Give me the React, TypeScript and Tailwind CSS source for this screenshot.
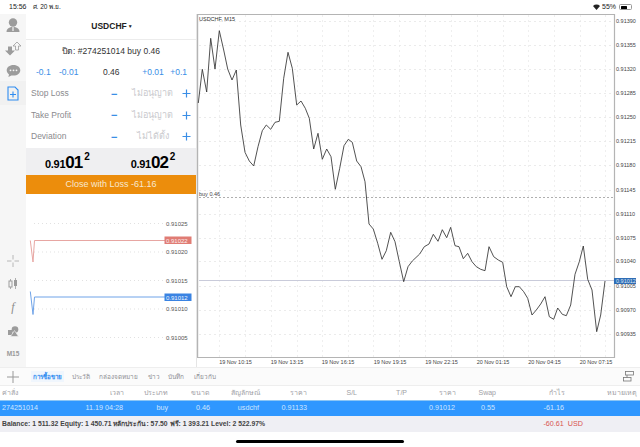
import React from "react";

const pts = "198.3,103 202.3,69.3 206.7,92 210.7,38.3 215,69 219.3,30.7 223.7,50 227.7,69 232,80 236.3,70 240.7,125 245,152.3 249.3,161 253.7,166 258,146.7 262.3,130.7 266.3,125 270.7,129.3 275,122.3 279.3,121.3 283.7,78.3 288,52.3 292.3,68.3 296.7,105 301,101 305.3,108.3 309.3,118.3 313.7,149 318,133.3 322.3,159.3 326.7,149 331,156.7 335.3,189.3 339.7,168.3 344,145.7 348.3,139.3 352.3,142.3 356.7,161 361,166.7 365,181.7 369,224 373.3,229 377.7,243.3 382,259.3 386.3,250.7 390.7,232.3 395,241.7 399.3,261.7 403.7,281.7 408,266.7 412.3,261 419.7,254 424.3,246.7 429,244 433.3,234.3 438,241.3 442.3,229.7 446.7,237.7 450.7,227.3 455,245.7 459,246.7 463.3,258.7 467.7,253.3 472,261.7 476.3,266.7 480.7,269.3 485,270.7 489,246.7 493.7,256.7 498.3,260 502.7,262.3 506.7,286.7 511,296.7 515.3,286.7 519.3,286.7 523.7,291.7 527.7,298.3 532,315 536.3,310 540.7,304 545,296.7 549.3,316.7 553.7,319.3 557.7,308 562.3,314.3 566.3,315.7 570.7,305 575,274.3 579.3,261.7 583.3,246 587.7,279.3 592,290 596.7,331.7 600.7,315 605,281";

const ox = 197;
const oy = 14;
const shifted = pts
  .split(" ")
  .map((p) => {
    const [x, y] = p.split(",").map(Number);
    return `${x - ox},${y - oy}`;
  })
  .join(" ");

const prices = [
  ["0.91390", 21],
  ["0.91355", 45],
  ["0.91320", 69],
  ["0.91285", 93],
  ["0.91250", 117],
  ["0.91215", 141],
  ["0.91180", 165],
  ["0.91145", 190],
  ["0.91110", 214],
  ["0.91075", 238],
  ["0.91040", 261],
  ["0.91005", 286],
  ["0.90970", 310],
  ["0.90935", 334],
] as const;
const times = [
  ["19 Nov 10:15", 235.5],
  ["19 Nov 13:15", 287],
  ["19 Nov 16:15", 338],
  ["19 Nov 19:15", 390],
  ["19 Nov 22:15", 441.5],
  ["20 Nov 01:15", 493],
  ["20 Nov 04:15", 544.5],
  ["20 Nov 07:15", 596],
] as const;
const vGrid = [219, 245, 271, 297, 322, 348, 373, 399, 425, 451, 477, 503, 528, 554, 580, 605];

function Chart() {
  return (
    <svg className="block w-[443px] h-[353px] shrink-0" viewBox="0 0 443 353" fontFamily="'Liberation Sans', sans-serif">
      {prices.map(([, y]) => (
        <line key={y} x1="2" x2="417" y1={y - 14 + 0.5} y2={y - 14 + 0.5} stroke="#e2e2e2" strokeWidth="0.7" strokeDasharray="2 3" />
      ))}
      {vGrid.map((x) => (
        <line key={x} x1={x - ox + 0.5} x2={x - ox + 0.5} y1="1" y2="343" stroke="#e8e8e8" strokeWidth="0.7" strokeDasharray="2 3" />
      ))}
      <line x1="0" x2="417" y1="0.5" y2="0.5" stroke="#b4b4b4" />
      <line x1="0.5" x2="0.5" y1="0" y2="344" stroke="#b4b4b4" strokeWidth="1.4" />
      <line x1="417.5" x2="417.5" y1="0" y2="344" stroke="#b4b4b4" strokeWidth="1.2" />
      <line x1="0" x2="417" y1="343.5" y2="343.5" stroke="#b4b4b4" />
      <line x1="2" x2="417" y1="183.5" y2="183.5" stroke="#9a9a9a" strokeWidth="0.8" strokeDasharray="2 2" />
      <line x1="2" x2="417" y1="266.5" y2="266.5" stroke="#c9cbda" />
      <polyline points={shifted} fill="none" stroke="#333" strokeWidth="0.85" strokeLinejoin="round" />
      <text x="2" y="6.5" fontSize="5.5" fill="#333">USDCHF, M15</text>
      <text x="2" y="182" fontSize="5.5" fill="#444">buy 0.46</text>
      {prices.map(([t, y]) => (
        <text key={t} x="419" y={y - 14 + 2} fontSize="5.5" fill="#444">{t}</text>
      ))}
      <rect x="417" y="264" width="22" height="6" fill="#2f6db5" />
      <text x="419" y="269" fontSize="5.5" fill="#dfe9f6">0.91012</text>
      {times.map(([t, x]) => (
        <text key={t} x={x - ox} y="349.5" fontSize="5.5" fill="#444" textAnchor="middle">{t}</text>
      ))}
    </svg>
  );
}

const depthLabels: [string, number][] = [
  ["0.91025", 29.5],
  ["0.91020", 58],
  ["0.91015", 86.5],
  ["0.91010", 115],
  ["0.91005", 143.5],
];

function Depth() {
  return (
    <svg className="block w-[170px] h-[173px] shrink-0" viewBox="0 0 170 173" fontFamily="'Liberation Sans', sans-serif">
      {depthLabels.map(([, y]) => (
        <line key={y} x1="8" x2="138" y1={y} y2={y} stroke="#d4d4d4" strokeWidth="0.7" strokeDasharray="1 3" />
      ))}
      <polyline points="4.3,46.5 7,68 8.5,46.5 139,46.5" fill="none" stroke="#e7a6a2" strokeWidth="1" />
      <polyline points="4.3,97.5 7,120.5 8.5,103 139,103" fill="none" stroke="#6fa3e8" strokeWidth="1" />
      {depthLabels.map(([t, y]) => (
        <text key={t} x="140" y={y + 2.2} fontSize="6" fill="#555">{t}</text>
      ))}
      <rect x="138.5" y="42.5" width="27" height="7.5" fill="#e07c74" />
      <text x="140" y="48.6" fontSize="6" fill="#fbeeee">0.91022</text>
      <rect x="138.5" y="99.5" width="27" height="7.5" fill="#3a83e2" />
      <text x="140" y="105.6" fontSize="6" fill="#eef5ff">0.91012</text>
    </svg>
  );
}

function Quote({ a, b, c }: { a: string; b: string; c: string }) {
  return (
    <span className="flex items-start font-bold text-black leading-none">
      <span className="text-[11px] tracking-[-0.3px] mt-[8px]">{a}</span>
      <span className="text-[17px] tracking-[-1px] mt-[3px]">{b}</span>
      <span className="text-[10px] ml-[2px] mt-[1px]">{c}</span>
    </span>
  );
}

function Row({ label, value }: { label: string; value: string }) {
  return (
    <div className="flex items-center h-[21.5px] pl-[5px] pr-[5px] text-[8.5px] text-[#8a8a8e]">
      <span className="w-[80px]">{label}</span>
      <span className="text-[#3a8ee6] font-bold text-[11px] w-[12px]">−</span>
      <span className="flex-1 text-center text-[9px] text-[#c9c9cd]">{value}</span>
      <svg className="w-[9px] h-[9px]" viewBox="0 0 9 9"><path d="M4.5 0.5v8M0.5 4.5h8" stroke="#3a8ee6" strokeWidth="1.2" /></svg>
    </div>
  );
}

const G = "#9c9c9c";

function Sidebar() {
  return (
    <div className="w-[26px] shrink-0 bg-[#f6f6f6] flex flex-col items-center text-[#9c9c9c]">
      <div className="flex flex-col items-center w-full pt-[3px]">
        <svg className="w-[16px] h-[16px]" viewBox="0 0 16 16"><circle cx="8" cy="5.5" r="4.2" fill={G} /><path d="M1.5 15c0-3.5 2.8-5 6.5-5s6.5 1.5 6.5 5z" fill={G} /><rect x="7.2" y="10" width="1.6" height="4" fill="#dcdcdc" /></svg>
        <svg className="w-[16px] h-[15px] mt-[8px]" viewBox="0 0 16 15"><path d="M3 5.5h4v4h3l-5 5-5-5h3z" fill={G} /><path d="M12 1l4 4h-2.5v4h-3V5H8z" fill="none" stroke={G} strokeWidth="0.8" /></svg>
        <svg className="w-[15px] h-[14px] mt-[8px]" viewBox="0 0 15 14"><path d="M7.5 1C3.5 1 .7 3.3.7 6.3c0 1.7.9 3.1 2.3 4.1L2.4 13l3-1.6c.6.1 1.4.2 2.1.2 4 0 6.8-2.3 6.8-5.3S11.5 1 7.5 1z" fill={G} /><circle cx="4.5" cy="6.3" r="0.9" fill="#f6f6f6" /><circle cx="7.5" cy="6.3" r="0.9" fill="#f6f6f6" /><circle cx="10.5" cy="6.3" r="0.9" fill="#f6f6f6" /></svg>
        <div className="w-full h-[24px] mt-[3px] flex items-center justify-center bg-[#f1f1f1]">
          <svg className="w-[12px] h-[15px]" viewBox="0 0 12 15" fill="none" stroke="#2f8cf0" strokeWidth="1.1"><path d="M1 1h7l3 3v10H1z" /><path d="M6 5.5v6M3 8.5h6" /></svg>
        </div>
      </div>
      <div className="mt-auto flex flex-col items-center w-full pb-[9px]">
        <svg className="w-[12px] h-[12px]" viewBox="0 0 12 12" stroke="#b0b0b0" strokeWidth="0.9"><path d="M6 0v4.5M6 7.5V12M0 6h4.5M7.5 6H12" /></svg>
        <svg className="w-[10px] h-[12px] mt-[11px]" viewBox="0 0 10 12"><path d="M2.5 1v10M7.5 0v11" stroke={G} strokeWidth="0.8" /><rect x="1" y="3" width="3" height="6" fill="#f6f6f6" stroke={G} /><rect x="6" y="2" width="3" height="6" fill={G} /></svg>
        <span className="mt-[10px] text-[12px] leading-[14px] italic text-[#8c8c8c]" style={{ fontFamily: "'Liberation Serif', serif" }}>f</span>
        <svg className="w-[11px] h-[11px] mt-[12px]" viewBox="0 0 11 11"><rect x="0" y="4" width="4.5" height="5" fill={G} /><circle cx="7" cy="3.5" r="3.3" fill={G} /><path d="M6.5 4.5l4 6h-8z" fill={G} stroke="#f6f6f6" strokeWidth="0.6" /></svg>
        <span className="mt-[13px] text-[6.5px] font-bold text-[#9a9a9a] leading-[8px]">M15</span>
      </div>
    </div>
  );
}

function Panel() {
  return (
    <div className="w-[171px] shrink-0 bg-white flex flex-col border-r border-[#e5e5e5]">
      <div className="h-[26px] shrink-0 flex items-center justify-center gap-[1px] pl-[2px] border-b border-[#ececec] text-[8.5px] font-bold text-[#222]">
        <span>USDCHF</span>
        <span className="text-[5px]">▼</span>
      </div>
      <div className="h-[22px] shrink-0 flex items-center justify-center text-[8.5px] text-[#333]">ปิด: #274251014 buy 0.46</div>
      <div className="h-[21px] shrink-0 flex items-center text-[8.5px] text-[#3a8ee6] pl-[10px] pr-[9px]">
        <span className="w-[23px]">-0.1</span>
        <span className="w-[38px]">-0.01</span>
        <span className="text-[#333] flex-1 pl-[6px]">0.46</span>
        <span className="w-[28px]">+0.01</span>
        <span>+0.1</span>
      </div>
      <Row label="Stop Loss" value="ไม่อนุญาต" />
      <Row label="Take Profit" value="ไม่อนุญาต" />
      <Row label="Deviation" value="ไม่ได้ตั้ง" />
      <div className="h-[27px] shrink-0 bg-[#efeff1] flex items-center gap-[41px] pl-[19px]">
        <Quote a="0.91" b="01" c="2" />
        <Quote a="0.91" b="02" c="2" />
      </div>
      <div className="h-[19.5px] shrink-0 bg-[#ec8d0c] flex items-center justify-center text-[9px] text-[#f7e7cf]">Close with Loss -61.16</div>
      <Depth />
    </div>
  );
}

const headers: [string, string][] = [
  ["ค่าสั่ง", "w-[90px] text-left"],
  ["เวลา", "w-[32px] text-right"],
  ["ประเภท", "w-[44px] text-right"],
  ["ขนาด", "w-[42px] text-right"],
  ["สัญลักษณ์", "w-[50px] text-right"],
  ["ราคา", "w-[47px] text-right"],
  ["S/L", "w-[50px] text-right"],
  ["T/P", "w-[50px] text-right"],
  ["ราคา", "w-[49px] text-right"],
  ["Swap", "w-[40px] text-right"],
  ["กำไร", "w-[69px] text-right"],
  ["หมายเหตุ", "w-[72px] text-right"],
];
const cells = ["274251014", "11.19 04:28", "buy", "0.46", "usdchf", "0.91133", "", "", "0.91012", "0.55", "-61.16", ""];
const cellW = ["w-[37px] text-left", "w-[84px] text-right", "w-[45px] text-right", "w-[42px] text-right", "w-[49px] text-right", "w-[48px] text-right", "w-[50px]", "w-[50px]", "w-[48px] text-right", "w-[40px] text-right", "w-[69px] text-right", "w-[72px]"];

export default function App() {
  return (
    <div className="w-[640px] h-[447px] bg-white flex flex-col overflow-hidden" style={{ fontFamily: "'Liberation Sans', 'Noto Sans', sans-serif" }}>
      <div className="h-[14px] shrink-0 flex items-center justify-between pl-[9px] pr-[8px] text-[6.5px] text-[#222]">
        <div className="flex gap-[6px]"><span className="text-[7px]">15:56</span><span>ศ. 20 พ.ย.</span></div>
        <div className="flex items-center gap-[2px]">
          <svg className="w-[7px] h-[6px]" viewBox="0 0 7 6"><path d="M3.5 6L0 2a5 5 0 0 1 7 0z" fill="#222" /></svg>
          <span className="text-[7px]">55%</span>
          <span className="w-[13px] h-[6px] border border-[#999] rounded-[1.5px] ml-[1px] flex p-[0.5px]"><span className="w-[6px] bg-black rounded-[0.5px]" /></span>
        </div>
      </div>
      <div className="flex h-[353px] shrink-0">
        <Sidebar />
        <Panel />
        <Chart />
      </div>
      <div className="h-[18px] shrink-0 flex items-center border-t border-[#eee] bg-[#fbfbfb] text-[6.4px] text-[#8e8e93]">
        <svg className="w-[12px] h-[12px] ml-[7px]" viewBox="0 0 12 12" stroke="#999"><path d="M6 0v12M0 6h12" /></svg>
        <span className="ml-[12px] bg-[#f0f6fd] text-[#2f8cf0] font-bold px-[2px] h-[11px] flex items-center text-[6.2px]">การซื้อขาย</span>
        <span className="ml-[8px]">ประวัติ</span>
        <span className="ml-[9px]">กล่องจดหมาย</span>
        <span className="ml-[10px]">ข่าว</span>
        <span className="ml-[8px]">บันทึก</span>
        <span className="ml-[10px]">เกี่ยวกับ</span>
        <svg className="w-[11px] h-[11px] ml-auto mr-[6px]" viewBox="0 0 11 11" fill="none" stroke="#777" strokeWidth="0.8"><rect x="2.5" y="0.5" width="8" height="3.5" /><rect x="0.5" y="6.5" width="7.5" height="3.5" /><path d="M4 4v2.5" /></svg>
      </div>
      <div className="h-[15px] shrink-0 flex items-center border-t border-[#eee] pl-[2px] text-[7px] text-[#a0a0a5]">
        {headers.map(([t, c], i) => (
          <span key={i} className={c}>{t}</span>
        ))}
      </div>
      <div className="h-[16px] shrink-0 flex items-center bg-[#2f97ff] border-t border-[#8cc6f5] pl-[2px] text-[7.2px] text-[#cfe6ff]">
        {cells.map((t, i) => (
          <span key={i} className={cellW[i]}>{t}</span>
        ))}
      </div>
      <div className="h-[16px] shrink-0 flex items-center bg-[#efeff4] px-[2px] text-[6.8px] font-bold text-[#444]">
        <span>Balance: 1 511.32 Equity: 1 450.71 หลักประกัน: 57.50 ฟรี: 1 393.21 Level: 2 522.97%</span>
        <span className="ml-auto mr-[55px] font-normal text-[7.2px] text-[#d9534f]">-60.61&nbsp;&nbsp;USD</span>
      </div>
      <div className="flex-1 bg-white flex items-center justify-center pt-[3px]">
        <span className="w-[168px] h-[3px] rounded-full bg-black" />
      </div>
    </div>
  );
}
